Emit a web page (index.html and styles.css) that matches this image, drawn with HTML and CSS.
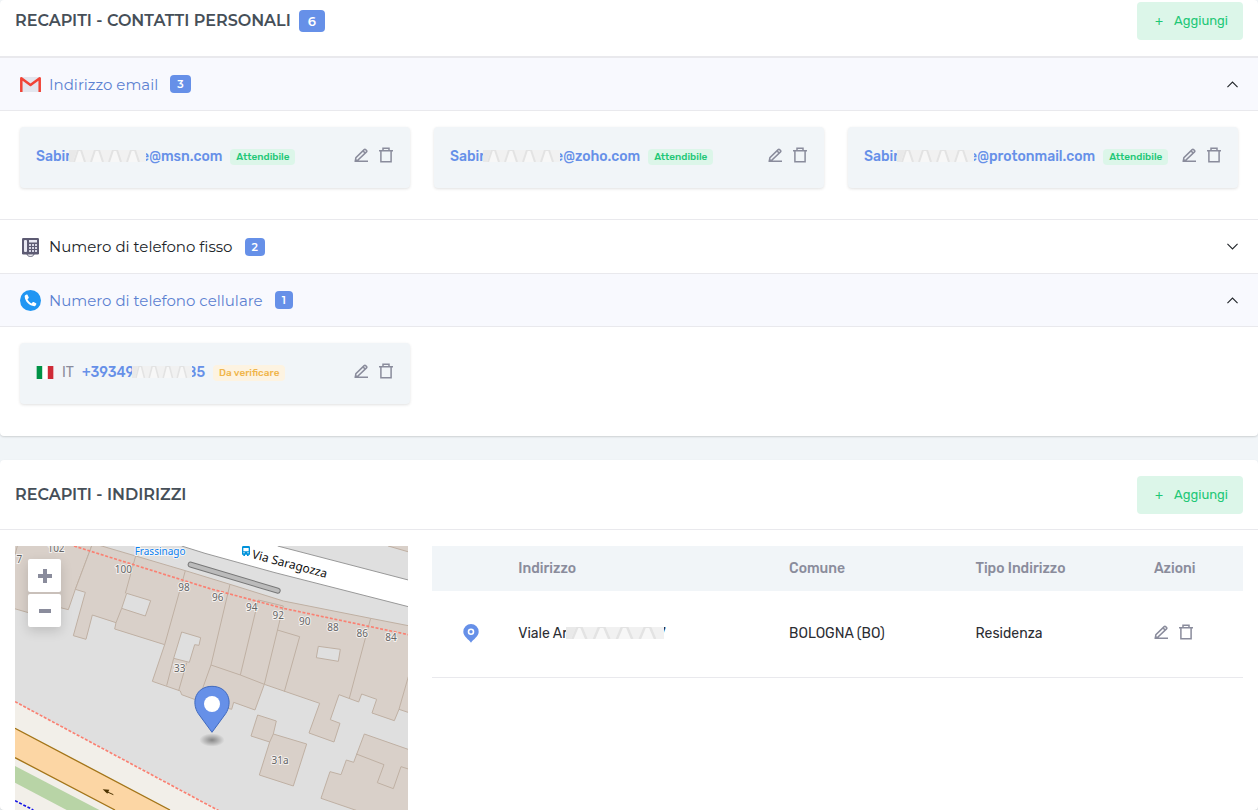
FILE: index.html
```html
<!DOCTYPE html>
<html lang="it">
<head>
    <meta charset="UTF-8">
    <meta name="viewport" content="width=device-width, initial-scale=1.0">
    <title>Recapiti</title>
    <link rel="stylesheet" href="styles.css">
</head>
<body>
    <!-- Icone condivise -->
    <svg class="sprite" aria-hidden="true">
        <symbol id="icon-edit" viewBox="0 0 14 16">
            <path d="M.5 14.200h13.500M1.400 13.400l.5-2.700 8.300-8.100a1 1 0 0 1 1.400 0l.9.9a1 1 0 0 1 0 1.400L4.200 12.900z" />
            <path d="M9 3.900l2.100 2.100" />
        </symbol>
        <symbol id="icon-trash" viewBox="0 0 14 16">
            <path d="M0 3.800h14M4 3.400V1.200h6v2.200M1.900 4v10.800h10.200V4" />
        </symbol>
        <symbol id="icon-chevron" viewBox="0 0 10 6">
            <path d="M.4 5.400L5 .8l4.600 4.600" />
        </symbol>
        <symbol id="scribble" viewBox="0 0 77 12" preserveAspectRatio="none">
            <rect width="77" height="12" fill="#f1f1f1" />
            <path d="M5 12L9 0h3l4 12M22 12l4-12h4l4 12M40 12l4-12h4l4 12M58 12l4-12h4l4 12" fill="#f7f7f7" stroke="#e3e3e3" stroke-width="2" />
            <path d="M0 0h8L4 12H0z" fill="#e9e9e9" />
        </symbol>
    </svg>

    <section class="card">
        <header class="card-header">
            <h2>RECAPITI - CONTATTI PERSONALI <span class="badge badge-lg">6</span></h2>
            <button type="button" class="btn-add"><span class="plus">+</span>Aggiungi</button>
        </header>

        <div class="accordion">
            <button type="button" class="accordion-header open" aria-expanded="true">
                <svg class="icon" viewBox="0 0 21 21">
                    <rect x="1" y="3" width="19" height="15" rx="1" fill="#e3e6ee" />
                    <path d="M1.300 18V4.200L10.500 11l9.200-6.800V18" fill="none" stroke="#f14336" stroke-width="2.500" stroke-linejoin="round" />
                </svg>
                <span>Indirizzo email</span>
                <span class="badge">3</span>
                <svg class="chevron"><use href="#icon-chevron" /></svg>
            </button>
            <div class="accordion-body">
                <div class="contact">
                    <a href="#" class="contact-value">Sabir<svg class="mask"><use href="#scribble" /></svg>e@msn.com</a>
                    <span class="status status-ok">Attendibile</span>
                    <div class="actions">
                        <button type="button" aria-label="Modifica"><svg><use href="#icon-edit" /></svg></button>
                        <button type="button" aria-label="Elimina"><svg><use href="#icon-trash" /></svg></button>
                    </div>
                </div>
                <div class="contact">
                    <a href="#" class="contact-value">Sabir<svg class="mask"><use href="#scribble" /></svg>e@zoho.com</a>
                    <span class="status status-ok">Attendibile</span>
                    <div class="actions">
                        <button type="button" aria-label="Modifica"><svg><use href="#icon-edit" /></svg></button>
                        <button type="button" aria-label="Elimina"><svg><use href="#icon-trash" /></svg></button>
                    </div>
                </div>
                <div class="contact">
                    <a href="#" class="contact-value">Sabir<svg class="mask"><use href="#scribble" /></svg>e@protonmail.com</a>
                    <span class="status status-ok">Attendibile</span>
                    <div class="actions">
                        <button type="button" aria-label="Modifica"><svg><use href="#icon-edit" /></svg></button>
                        <button type="button" aria-label="Elimina"><svg><use href="#icon-trash" /></svg></button>
                    </div>
                </div>
            </div>

            <button type="button" class="accordion-header" aria-expanded="false">
                <svg class="icon" viewBox="0 0 21 21">
                    <path d="M7 18c0 3.200 7 3.200 7 0" fill="none" stroke="#5d5b73" />
                    <rect x="2" y="2" width="17" height="16.500" rx="1.200" fill="#5d5b73" />
                    <rect x="4" y="4" width="3" height="12" rx="1" fill="#e8e8f2" />
                    <rect x="9" y="4" width="8" height="2.500" fill="#e8e8f2" />
                    <path d="M9 9h8M9 12h8M9 15h8" stroke="#d5d5e3" stroke-width="1.800" stroke-dasharray="2 1" />
                </svg>
                <span>Numero di telefono fisso</span>
                <span class="badge">2</span>
                <svg class="chevron"><use href="#icon-chevron" /></svg>
            </button>

            <button type="button" class="accordion-header open" aria-expanded="true">
                <svg class="icon" viewBox="0 0 21 21">
                    <circle cx="10.500" cy="10.500" r="10.500" fill="#2196f3" />
                    <path d="M5.200 5.300l1.300-.8c.4-.2.800-.1 1 .3l1.200 2.500c.2.400.1.700-.2 1l-1 .9c.8 1.900 2.300 3.300 4.200 4.200l.9-1.100c.3-.3.600-.4 1-.2l2.400 1.200c.4.200.5.600.3 1l-.7 1.300c-.3.500-.7.700-1.200.6-5.200-.6-9.300-4.500-9.700-9.700 0-.5.100-.9.500-1.200z" fill="#fff" />
                </svg>
                <span>Numero di telefono cellulare</span>
                <span class="badge">1</span>
                <svg class="chevron"><use href="#icon-chevron" /></svg>
            </button>
            <div class="accordion-body">
                <div class="contact">
                    <svg class="flag" viewBox="0 0 18 14">
                        <rect width="18" height="14" fill="#fff" />
                        <rect width="6" height="14" fill="#009246" />
                        <rect x="12" width="6" height="14" fill="#ce2b37" />
                    </svg>
                    <span class="country">IT</span>
                    <a href="#" class="contact-value">+39349<svg class="mask mask-sm"><use href="#scribble" /></svg>85</a>
                    <span class="status status-pending">Da verificare</span>
                    <div class="actions">
                        <button type="button" aria-label="Modifica"><svg><use href="#icon-edit" /></svg></button>
                        <button type="button" aria-label="Elimina"><svg><use href="#icon-trash" /></svg></button>
                    </div>
                </div>
            </div>
        </div>
    </section>

    <section class="card">
        <header class="card-header card-header-full">
            <h2>RECAPITI - INDIRIZZI</h2>
            <button type="button" class="btn-add"><span class="plus">+</span>Aggiungi</button>
        </header>

        <div class="addresses">
            <div class="map">
                <svg class="map-canvas" viewBox="45 18 1180 792" role="img" aria-label="Mappa">
                    <defs>
                        <radialGradient id="pin-shadow">
                            <stop offset="0" stop-color="#000" stop-opacity=".4" />
                            <stop offset="1" stop-color="#000" stop-opacity="0" />
                        </radialGradient>
                    </defs>
                    <rect x="45" y="18" width="1180" height="792" fill="#dfdfdf" />

                    <!-- Via Saragozza -->
                    <path d="M545 18H833L1225 120V200L825 98L615 40z" fill="#fff" />
                    <path d="M833 18L1225 120M545 18L615 40L825 98L1225 200" fill="none" stroke="#999" stroke-width="3" />

                    <!-- Edifici -->
                    <g class="building">
                        <path d="M40 10H278L226 148L205 209L130 190L120 228L40 205z" />
                        <path d="M278 10L407 48L556 92L690 133L850 183L1112 235L1230 258V519L1197 508L1183 542L1116 519L1130 478L1085 462L1076 486L1017 464L991 539L1020 550L1002 606L927 579L959 490L793 433L765 510L701 487L695 508L583 478L545 464L541 453L457 424L494 314L344 267L348 248L277 225L258 298L220 287L256 157L226 148z" />
                        <path d="M773 525L829 543L820 582L920 612L880 738L778 705L809 606L753 588z" />
                        <path d="M1093 582L1230 630V815H1080L963 775L990 695L1023 704L1039 660L1061 667z" />
                        <path d="M1165 18L1230 37V10z" />
                    </g>
                    <g class="building-line">
                        <path d="M52 18L45 45M407 48L376 160M365 205L348 248M556 92L494 314M690 133L633 375L608 445M633 375L721 405L793 433" />
                        <path d="M721 405L775 180L850 198L793 433M832 270L899 290L853 455M1112 235L1048 475M1225 410L1197 508M521 355L500 437M560 368L536 452M820 582L809 606" />
                        <path d="M1069 642L1152 674L1132 728L1180 746L1203 680L1225 687" />
                    </g>
                    <g class="courtyard">
                        <path d="M380 160L452 182L436 228L365 205z" />
                        <path d="M545 276L602 293L597 316L584 314L568 367L521 355z" />
                        <path d="M955 319L1021 328L1015 364L949 353z" />
                    </g>

                    <!-- Banchina -->
                    <path d="M572 74L833 152" stroke="#777" stroke-width="18" stroke-linecap="round" />
                    <path d="M572 74L833 152" stroke="#bbb" stroke-width="12" stroke-linecap="round" />

                    <!-- Viale in basso -->
                    <path d="M45 485L655 810H45z" fill="#f2efe9" />
                    <path d="M45 565L510 810H345L45 653z" fill="#fcd6a4" />
                    <path d="M45 565L510 810M345 810L45 653" stroke="#a37519" stroke-width="4" />
                    <path d="M45 678L298 810H200L45 728z" fill="#b8d4a6" />
                    <path d="M45 782L100 810" stroke="#1414e6" stroke-width="5" stroke-dasharray="9 5" />
                    <path d="M340 764L316 753" stroke="#4d3300" stroke-width="3" />
                    <path d="M308 748L328 749L322 761z" fill="#4d3300" />

                    <g class="footway">
                        <path d="M222 18L630 146L850 205L1225 284" />
                        <path d="M45 485L660 814" />
                    </g>

                    <g class="house-number">
                        <text x="168" y="35">102</text>
                        <text x="58" y="69">7</text>
                        <text x="370" y="98">100</text>
                        <text x="552" y="153">98</text>
                        <text x="653" y="184">96</text>
                        <text x="755" y="213">94</text>
                        <text x="835" y="237">92</text>
                        <text x="914" y="255">90</text>
                        <text x="999" y="273">88</text>
                        <text x="1087" y="290">86</text>
                        <text x="1173" y="304">84</text>
                        <text x="539" y="395">33</text>
                        <text x="840" y="671">31a</text>
                    </g>

                    <g fill="#0092da">
                        <path d="M730 18H746Q750 18 750 22V44H746V48H741V44H735V48H730V44H726V22Q726 18 730 18z" />
                        <path d="M730 24H746V34H730zM730 37H734V40H730zM742 37H746V40H742z" fill="#fff" />
                    </g>
                    <text class="stop-name" x="404" y="44">Frassinago</text>
                    <text class="street-name" transform="translate(754 54) rotate(15)">Via Saragozza</text>

                    <!-- Segnaposto -->
                    <ellipse cx="636" cy="600" rx="38" ry="20" fill="url(#pin-shadow)" />
                    <path d="M636 577L595 521C572 486 588 439 636 439S700 486 677 521z" fill="#6690e8" stroke="#4069bd" stroke-width="3" />
                    <circle cx="636" cy="492" r="24" fill="#fff" />
                </svg>
                <div class="map-zoom">
                    <button type="button" aria-label="Ingrandisci"><svg viewBox="0 0 14 14"><path d="M7 0v14M0 7h14" /></svg></button>
                    <button type="button" aria-label="Riduci"><svg viewBox="0 0 14 14"><path d="M1 7h12" /></svg></button>
                </div>
            </div>

            <table class="address-table">
                <thead>
                    <tr>
                        <th class="col-pin"></th>
                        <th class="col-address">Indirizzo</th>
                        <th class="col-city">Comune</th>
                        <th class="col-type">Tipo Indirizzo</th>
                        <th>Azioni</th>
                    </tr>
                </thead>
                <tbody>
                    <tr>
                        <td class="col-pin">
                            <svg class="pin" viewBox="0 0 16 19">
                                <path d="M8 18.700C6 15.500.3 12.500.3 7.700a7.700 7.700 0 0 1 15.400 0C15.700 12.500 10 15.500 8 18.700z" fill="#6690e8" />
                                <circle cx="8" cy="7.700" r="2.500" fill="none" stroke="#fff" stroke-width="1.600" />
                            </svg>
                        </td>
                        <td>Viale Ar<svg class="mask mask-lg"><use href="#scribble" /></svg>7</td>
                        <td>BOLOGNA (BO)</td>
                        <td>Residenza</td>
                        <td>
                            <div class="actions">
                                <button type="button" aria-label="Modifica"><svg><use href="#icon-edit" /></svg></button>
                                <button type="button" aria-label="Elimina"><svg><use href="#icon-trash" /></svg></button>
                            </div>
                        </td>
                    </tr>
                </tbody>
            </table>
        </div>
    </section>
</body>
</html>
```
FILE: styles.css
```css
* {
    box-sizing: border-box;
}

body {
    margin: 0;
    background-color: #f1f5f8;
    color: #2b2d33;
    font-family: Rubik, Roboto, sans-serif;
    font-size: 14px;
    line-height: 21px;
}

button {
    font: inherit;
    border: none;
    background: none;
    padding: 0;
    cursor: pointer;
}

a {
    text-decoration: none;
}

svg {
    display: block;
}

.sprite {
    position: absolute;
    width: 0;
    height: 0;
}

.card {
    background-color: #fff;
    border-radius: 4px;
    box-shadow: 0 1px 2px rgba(0, 0, 0, 0.15);
    margin-bottom: 24px;
}

.card:last-child {
    margin-bottom: 0;
}

.card-header {
    display: flex;
    justify-content: space-between;
    align-items: center;
    padding: 2px 15px 16px;
    border-bottom: 2px solid #e9e9ed;
}

.card-header-full {
    padding: 16px 15px 15px;
    border-bottom-width: 1px;
}

.card-header h2 {
    display: flex;
    align-items: center;
    gap: 8px;
    margin: 0;
    font-family: Montserrat, Inter, sans-serif;
    font-size: 16px;
    font-weight: 600;
    line-height: 20px;
    color: #464f58;
}

.badge {
    padding: 0 7px;
    border-radius: 4px;
    background-color: #6690e8;
    color: #fff;
    font-family: Montserrat, Inter, sans-serif;
    font-size: 11px;
    font-weight: 600;
    line-height: 18px;
}

.badge-lg {
    padding: 0 9px;
    font-size: 13px;
    line-height: 22px;
}

.btn-add {
    display: flex;
    align-items: center;
    gap: 8px;
    padding: 8px 15px;
    border-radius: 4px;
    background-color: #dcf6e9;
    color: #1fc877;
    font-size: 13px;
    line-height: 22px;
}

.plus {
    width: 14px;
    text-align: center;
}

/* Accordion */
.accordion-header {
    display: flex;
    align-items: center;
    width: 100%;
    height: 54px;
    padding: 0 20px;
    border-bottom: 1px solid #e9e9ed;
    color: #212529;
    font-family: Montserrat, Inter, sans-serif;
    font-size: 15px;
}

.accordion-header.open {
    height: 53px;
    background-color: #f8f9fe;
    color: #5c81d1;
}

.accordion-header .icon {
    width: 21px;
    height: 21px;
    margin-right: 8px;
}

.accordion-header .badge {
    margin-left: 12px;
}

.chevron {
    width: 11px;
    height: 7px;
    margin-left: auto;
    fill: none;
    stroke: #212529;
    transform: rotate(180deg);
}

.open .chevron {
    transform: none;
}

.accordion-body {
    display: grid;
    grid-template-columns: repeat(3, 1fr);
    gap: 24px;
    padding: 16px 20px 31px;
    border-bottom: 1px solid #e9e9ed;
}

.accordion-body:last-child {
    padding-bottom: 32px;
    border-bottom: none;
}

.contact {
    display: flex;
    align-items: center;
    gap: 8px;
    padding: 19px 17px 21px 16px;
    border-radius: 4px;
    background-color: #f1f5f8;
    box-shadow: 0 1px 3px rgba(0, 0, 0, 0.12);
}

.contact-value {
    color: #6690e8;
    font-weight: 500;
    white-space: nowrap;
}

.flag {
    width: 18px;
    height: 13px;
}

.country {
    color: #8a8c9c;
}

.status {
    padding: 0 6px;
    border-radius: 4px;
    font-size: 10px;
    font-weight: 500;
    line-height: 16px;
}

.status-ok {
    background-color: #dcf6e9;
    color: #1fc877;
}

.status-pending {
    background-color: #fdf3e1;
    color: #f0b64c;
}

/* Copre la parte riservata del dato */
.mask {
    position: relative;
    display: inline-block;
    width: 77px;
    height: 12px;
    margin: 0 -5px 0 -2px;
    vertical-align: -1px;
}

.mask-sm {
    width: 60px;
}

.mask-lg {
    width: 98px;
}

.actions {
    display: flex;
    gap: 11px;
    margin-left: auto;
    padding-bottom: 4px;
}

.actions svg {
    width: 14px;
    height: 16px;
    fill: none;
    stroke: #8a8c9c;
    stroke-width: 1.5;
}

/* Indirizzi */
.addresses {
    display: grid;
    grid-template-columns: repeat(12, 1fr);
    gap: 24px;
    align-items: start;
    padding: 16px 15px 0;
}

.map {
    grid-column: span 4;
    position: relative;
}

.map-canvas {
    width: 100%;
}

.building path {
    fill: #d9d0c9;
    stroke: #bfb0a3;
    stroke-width: 3;
}

.building-line path {
    fill: none;
    stroke: #bfb0a3;
    stroke-width: 3;
}

.courtyard path {
    fill: #dfdfdf;
    stroke: #bfb0a3;
    stroke-width: 3;
}

.footway path {
    fill: none;
    stroke: #fa8072;
    stroke-width: 5;
    stroke-dasharray: 9 5;
}

.map-canvas text {
    font-family: "Noto Sans", sans-serif;
    font-size: 30px;
    paint-order: stroke;
    stroke: rgba(255, 255, 255, 0.7);
    stroke-width: 6px;
}

.map-canvas .house-number text {
    fill: #666;
    text-anchor: middle;
}

.map-canvas .stop-name {
    fill: #0d7fee;
}

.map-canvas .street-name {
    font-size: 36px;
    fill: #111;
}

.map-zoom {
    position: absolute;
    top: 13px;
    left: 13px;
    display: grid;
    gap: 2px;
    border-radius: 2px;
    background-color: #c9c0ba;
    box-shadow: 0 4px 12px rgba(0, 0, 0, 0.15);
}

.map-zoom button {
    display: grid;
    place-items: center;
    width: 33px;
    height: 33px;
    border-radius: 2px;
    background-color: #fff;
}

.map-zoom svg {
    width: 14px;
    height: 14px;
    stroke: #8a8c9c;
    stroke-width: 4;
}

.address-table {
    grid-column: span 8;
    width: 100%;
    border-collapse: collapse;
    table-layout: fixed;
}

.address-table th,
.address-table td {
    padding: 12px 15px;
    text-align: left;
}

.address-table th {
    background-color: #f1f5f8;
    color: #8a8c9c;
    font-weight: 500;
}

.address-table td {
    height: 86px;
    border-bottom: 1px solid #e9e9ed;
}

.address-table .col-pin {
    width: 71px;
    padding: 0 0 0 31px;
}

.col-address {
    width: 33.4%;
}

.col-city {
    width: 23%;
}

.col-type {
    width: 22%;
}

.pin {
    width: 16px;
    height: 19px;
}
```
